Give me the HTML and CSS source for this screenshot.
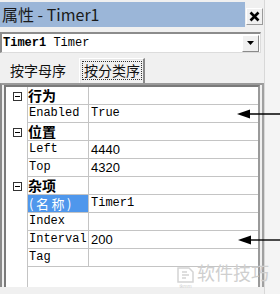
FILE: index.html
```html
<!DOCTYPE html>
<html>
<head>
<meta charset="utf-8">
<link rel="stylesheet" href="styles.css">
</head>
<body>
<div class="win">
  <div class="titlerow">
    <div class="caption">属性 - Timer1</div>
    <div class="closebtn"><svg width="11" height="11" viewBox="0 0 11 11"><path d="M1.5 1.5L9.5 9.5M9.5 1.5L1.5 9.5" stroke="#000" stroke-width="2.6"/></svg></div>
  </div>
  <div class="combo">
    <span class="combo-text"><b>Timer1</b> Timer</span>
    <span class="dd"><svg width="7" height="4" viewBox="0 0 7 4"><path d="M0 0H7L3.5 4Z" fill="#000"/></svg></span>
  </div>
  <div class="tabs">
    <div class="tab">按字母序</div>
    <div class="tab active"><span class="focus">按分类序</span></div>
  </div>
  <div class="grid">
    <div class="grid-inner">
      <div class="row cat"><div class="g"><span class="box"></span></div><div class="n">行为</div><div class="v"></div></div>
      <div class="row"><div class="g"></div><div class="n">Enabled</div><div class="v">True</div></div>
      <div class="row cat"><div class="g"><span class="box"></span></div><div class="n">位置</div><div class="v"></div></div>
      <div class="row"><div class="g"></div><div class="n">Left</div><div class="v num">4440</div></div>
      <div class="row"><div class="g"></div><div class="n">Top</div><div class="v num">4320</div></div>
      <div class="row cat"><div class="g"><span class="box"></span></div><div class="n">杂项</div><div class="v"></div></div>
      <div class="row"><div class="g"></div><div class="n sel">(名称)</div><div class="v">Timer1</div></div>
      <div class="row"><div class="g"></div><div class="n">Index</div><div class="v"></div></div>
      <div class="row"><div class="g"></div><div class="n">Interval</div><div class="v num">200</div></div>
      <div class="row"><div class="g"></div><div class="n">Tag</div><div class="v"></div></div>
      <div class="filler"><div class="g"></div></div>
    </div>
  </div>
</div>
<svg class="arrow a1" width="44" height="10" viewBox="0 0 44 10"><path d="M10 5H44" stroke="#000" stroke-width="1.4"/><path d="M0 5L13 0.5V9.5Z" fill="#000"/></svg>
<svg class="arrow a2" width="42" height="10" viewBox="0 0 42 10"><path d="M10 5H42" stroke="#000" stroke-width="1.4"/><path d="M0 5L13 0.5V9.5Z" fill="#000"/></svg>
<div class="watermark">
  <div class="wm-logo">
    <svg width="17" height="16" viewBox="0 0 17 16"><path d="M1 1H12L16 5V15H1Z M5 5H10M5 8H12M5 11H9" fill="none" stroke="#d4d4d4" stroke-width="1.5"/></svg>
    <span class="wm-small">tkmm</span>
  </div>
  <span class="wm-text">软件技巧</span>
</div>
</body>
</html>
```
FILE: styles.css
```css
html, body {
  margin: 0;
  padding: 0;
}
body {
  width: 280px;
  height: 294px;
  background: #f4f4f4;
  position: relative;
  overflow: hidden;
  font-family: "Noto Sans CJK SC", "Liberation Sans", sans-serif;
}
.win {
  width: 265px;
  height: 294px;
  background: #f0f0f0;
  border-right: 1px solid #d8d8d8;
  box-sizing: border-box;
  padding-top: 2px;
}
.titlerow {
  display: flex;
  align-items: flex-start;
  height: 25px;
}
.caption {
  width: 245px;
  height: 25px;
  background: #9bb6d8;
  color: #1a1a1a;
  font-size: 16px;
  line-height: 25px;
  padding-left: 2px;
  box-sizing: border-box;
}
.closebtn {
  margin-left: 1px;
  margin-top: 6px;
  width: 17px;
  height: 17px;
  box-sizing: border-box;
  border: 1px solid #fff;
  border-right-color: #9a9a9a;
  border-bottom-color: #9a9a9a;
  background: #f0f0f0;
  display: flex;
  align-items: center;
  justify-content: center;
}
.combo {
  margin-top: 5px;
  width: 261px;
  height: 21px;
  box-sizing: border-box;
  background: #fff;
  border-top: 2px solid #8c8c8c;
  border-left: 2px solid #8c8c8c;
  border-right: 1px solid #dcdcdc;
  border-bottom: 1px solid #dcdcdc;
  display: flex;
  align-items: center;
  justify-content: space-between;
}
.combo-text {
  font-family: "Liberation Mono", monospace;
  font-size: 12px;
  padding-left: 1px;
  color: #000;
}
.dd {
  width: 17px;
  height: 17px;
  box-sizing: border-box;
  background: #f0f0f0;
  border: 1px solid #fff;
  border-right-color: #8a8a8a;
  border-bottom-color: #8a8a8a;
  margin-right: 1px;
  display: flex;
  align-items: center;
  justify-content: center;
}
.tabs {
  margin-top: 4px;
  height: 26px;
  display: flex;
  align-items: flex-end;
  padding-left: 10px;
}
.tab {
  font-size: 14px;
  color: #111;
  height: 24px;
  line-height: 22px;
  box-sizing: border-box;
}
.tab.active {
  margin-left: 13px;
  height: 25px;
  padding: 2px 1px 0 2px;
  border: 1px solid #fff;
  border-right: 2px solid #8a8a8a;
  border-bottom: none;
  box-shadow: inset 1px 1px 0 #e6e6e6;
}
.focus {
  display: block;
  border: 1px dotted #333;
  line-height: 17px;
  padding: 0 1px;
}
.grid {
  width: 264px;
  height: 204px;
  box-sizing: border-box;
  border-top: 2px solid #9a9a9a;
  border-left: 2px solid #8a8a8a;
  border-right: 2px solid #a0a0a0;
  padding: 0 2px 0 2px;
  background: #f0f0f0;
}
.grid-inner {
  height: 100%;
  box-sizing: border-box;
  border-top: 2px solid #7a7a7a;
  border-left: 2px solid #7a7a7a;
  border-right: 2px solid #9a9a9a;
  background: #fff;
  display: flex;
  flex-direction: column;
}
.row {
  display: grid;
  grid-template-columns: 22px 61px 1fr;
  height: 18px;
}
.g {
  border-right: 1px solid #c4c4c4;
  box-sizing: border-box;
  display: flex;
  align-items: center;
  padding-left: 7px;
}
.n, .v {
  box-sizing: border-box;
  border-bottom: 1px solid #c4c4c4;
  font-family: "Liberation Mono", monospace;
  font-size: 12px;
  line-height: 17px;
  color: #000;
  white-space: nowrap;
  overflow: hidden;
}
.n {
  border-right: 1px solid #c4c4c4;
  padding-left: 1px;
}
.v {
  padding-left: 2px;
}
.v.num {
  font-family: "Liberation Sans", sans-serif;
  font-size: 13px;
}
.cat .n {
  font-family: "Noto Sans CJK SC", sans-serif;
  font-weight: bold;
  font-size: 14px;
  line-height: 17px;
  padding-left: 0;
  overflow: visible;
}
.n.sel {
  background: #4f97ec;
  color: #fff;
  font-family: "Noto Sans CJK SC", sans-serif;
  font-size: 13px;
  line-height: 16px;
  padding-top: 1px;
  letter-spacing: 2.5px;
  padding-left: 1px;
  overflow: visible;
}
.box {
  width: 9px;
  height: 9px;
  box-sizing: border-box;
  border: 1px solid #333;
  position: relative;
  background: #fff;
}
.box::after {
  content: "";
  position: absolute;
  left: 1px;
  right: 1px;
  top: 3px;
  height: 1px;
  background: #000;
}
.filler {
  flex: 1;
  display: grid;
  grid-template-columns: 22px 1fr;
}
.arrow {
  position: absolute;
}
.a1 {
  left: 237px;
  top: 109px;
}
.a2 {
  left: 238px;
  top: 235px;
}
.watermark {
  position: absolute;
  left: 177px;
  top: 260px;
  display: flex;
  align-items: flex-start;
  gap: 3px;
}
.wm-logo {
  display: flex;
  flex-direction: column;
  align-items: center;
  margin-top: 7px;
}
.wm-small {
  font-family: "Liberation Sans", sans-serif;
  font-size: 5px;
  color: #d0d0d0;
  line-height: 7px;
}
.wm-text {
  font-size: 18px;
  line-height: 24px;
  color: #cfcfcf;
}
```
